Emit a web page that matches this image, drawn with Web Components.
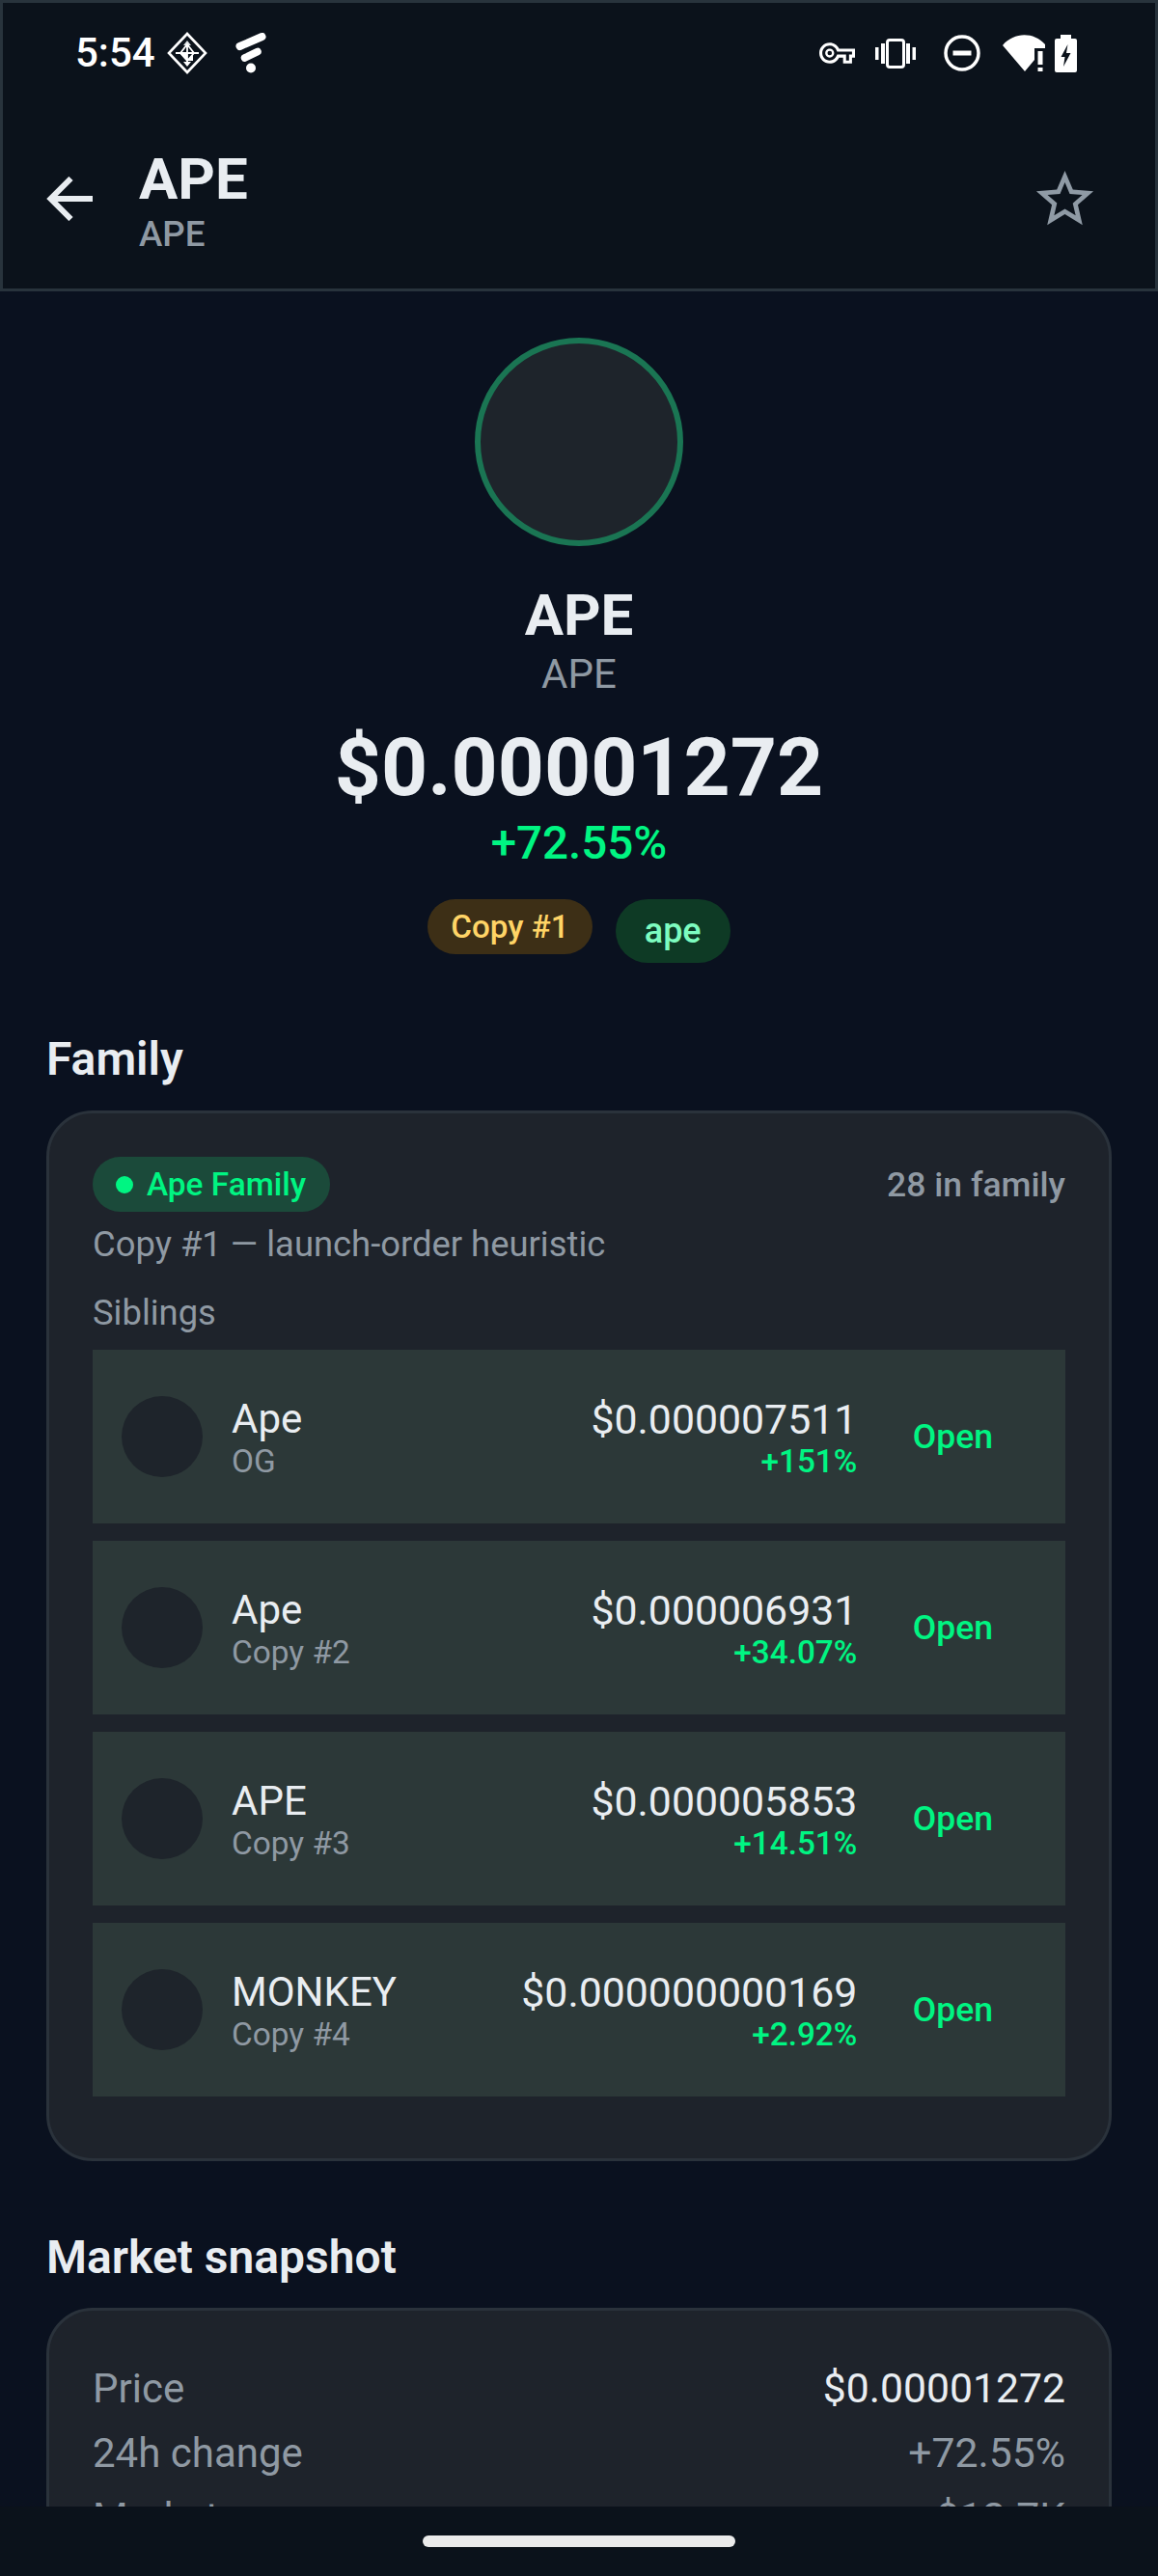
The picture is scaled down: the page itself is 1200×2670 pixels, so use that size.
<!DOCTYPE html>
<html lang="en">
<head>
<meta charset="utf-8">
<title>APE</title>
<style>
    html, body { margin: 0; padding: 0; background: #0a111f; }
    body { font-family: Roboto, "Liberation Sans", sans-serif; }
</style>
</head>
<body>

<coin-screen>
    <status-bar slot="top" time="5:54"></status-bar>
    <app-header slot="top" title="APE" subtitle="APE"></app-header>

    <coin-hero name="APE" symbol="APE" price="$0.00001272" change="+72.55%" copy="Copy #1" tag="ape"></coin-hero>

    <page-section heading="Family" gap="72">
        <family-card label="Ape Family" count="28 in family" note="Copy #1 — launch-order heuristic">
            <sibling-row name="Ape" sub="OG" price="$0.000007511" change="+151%"></sibling-row>
            <sibling-row name="Ape" sub="Copy #2" price="$0.000006931" change="+34.07%"></sibling-row>
            <sibling-row name="APE" sub="Copy #3" price="$0.000005853" change="+14.51%"></sibling-row>
            <sibling-row name="MONKEY" sub="Copy #4" price="$0.000000000169" change="+2.92%"></sibling-row>
        </family-card>
    </page-section>

    <page-section heading="Market snapshot" gap="72" tight>
        <snapshot-card>
            <kv-row label="Price" value="$0.00001272" bright></kv-row>
            <kv-row label="24h change" value="+72.55%"></kv-row>
            <kv-row label="Market cap" value="$12.7K"></kv-row>
        </snapshot-card>
    </page-section>

    <nav-pill slot="bottom"></nav-pill>
</coin-screen>

<script>
class CoinScreen extends HTMLElement {
    constructor() {
        super();
        this.attachShadow({ mode: 'open' });
        this.shadowRoot.innerHTML = `
        <style>
            :host {
                display: flex;
                flex-direction: column;
                width: 1200px;
                height: 2670px;
                overflow: hidden;
                background: #0a111f;
                color: #e9edf1;
            }
            .scroll {
                flex: 1;
                min-height: 0;
                overflow: hidden;
            }
        </style>
        <slot name="top"></slot>
        <div class="scroll"><slot></slot></div>
        <slot name="bottom"></slot>
        `;
    }
}

class StatusBar extends HTMLElement {
    constructor() {
        super();
        this.attachShadow({ mode: 'open' });
        this.shadowRoot.innerHTML = `
        <style>
            :host {
                display: flex;
                align-items: center;
                justify-content: space-between;
                height: 110px;
                box-sizing: border-box;
                padding: 0 81px 3px 75px;
                background: #0b121b;
                border: 3px solid #28333c;
                border-bottom: 0;
                color: #fff;
            }
            .left, .right { display: flex; align-items: center; }
            .time { font: 500 42px/50px Roboto, sans-serif; width: 83px; }
            svg { display: block; fill: #fff; }
            .diamond { margin-left: 12px; }
            .feather { margin-left: 29px; }
            .vib { margin-left: 21px; }
            .dnd { margin-left: 29px; }
            .wifi { margin-left: 23px; }
            .batt { margin-left: 10px; }
        </style>
        <div class="left">
            <span class="time">${this.getAttribute('time')}</span>
            <svg class="diamond" width="42" height="44" viewBox="0 0 42 44">
                <path fill="none" stroke="#fff" stroke-width="2.6" d="M21 2 L40 22 L21 42 L2 22 Z"/>
                <path d="M21 9 L25 14 L21 14 Z M21 9 L17 14 L21 14 Z" fill="#dfe3e6"/>
                <path fill="none" stroke="#fff" stroke-width="1.8" d="M21 13 L28 22 L21 30 L14 22 Z M9 22 H33 M21 13 V35"/>
                <path d="M14 23 H21 V30 Z M21 30 L27 23 V30 Z M21 36 L17 31 H25 Z"/>
            </svg>
            <svg class="feather" width="32" height="42" viewBox="0 0 32 42">
                <path fill="none" stroke="#fff" stroke-width="8" stroke-linecap="round" d="M4.500 14 L27.500 4"/>
                <path fill="none" stroke="#fff" stroke-width="7.500" stroke-linecap="round" d="M9.500 26 L23 19.500"/>
                <circle cx="16" cy="36.500" r="5"/>
            </svg>
        </div>
        <div class="right">
            <svg class="key" width="37" height="22" viewBox="0 5 24 14">
                <path fill-rule="evenodd" d="M22 19h-6v-4h-2.680c-1.140 2.420-3.600 4-6.320 4-3.860 0-7-3.140-7-7s3.140-7 7-7c2.720 0 5.170 1.580 6.320 4H24v6h-2v4zm-4-2h2v-4h2v-2H11.940l-.23-.67C11.010 8.340 9.110 7 7 7c-2.760 0-5 2.240-5 5s2.240 5 5 5c2.110 0 4.010-1.340 4.710-3.330l.23-.67H18v4zM7 15c-1.650 0-3-1.350-3-3s1.350-3 3-3 3 1.350 3 3-1.350 3-3 3zm0-4.500a1.500 1.500 0 1 0 0 3 1.500 1.500 0 0 0 0-3z"/>
            </svg>
            <svg class="vib" width="42" height="31" viewBox="0 0 42 31">
                <rect x="12.500" y="1.500" width="17" height="28" rx="2.500" fill="none" stroke="#fff" stroke-width="3"/>
                <rect x="0" y="9" width="3.500" height="13"/><rect x="6" y="5" width="4" height="21"/>
                <rect x="32" y="5" width="4" height="21"/><rect x="38.500" y="9" width="3.500" height="13"/>
            </svg>
            <svg class="dnd" width="38" height="38" viewBox="0 0 38 38">
                <circle cx="19" cy="19" r="17" fill="none" stroke="#fff" stroke-width="3.500"/>
                <rect x="9.500" y="16.500" width="19" height="5"/>
            </svg>
            <svg class="wifi" width="44" height="38" viewBox="0 0 44 38">
                <path d="M23 38 L0 11 C12 -3 32 -3 44 10 L44 14 L33 14 L33 26 Z"/>
                <rect x="36.500" y="17" width="5" height="14"/>
                <rect x="36.500" y="34" width="5" height="4"/>
            </svg>
            <svg class="batt" width="23" height="39" viewBox="0 0 23 39">
                <path fill-rule="evenodd" d="M6 0 H17 V4 H21 Q23 4 23 6 V37 Q23 39 21 39 H2 Q0 39 0 37 V6 Q0 4 2 4 H6 Z M13.500 10 L6.500 23 H10.500 L9 33 L16.500 19 H12 Z"/>
            </svg>
        </div>
        `;
    }
}

class AppHeader extends HTMLElement {
    constructor() {
        super();
        this.attachShadow({ mode: 'open' });
        this.shadowRoot.innerHTML = `
        <style>
            :host {
                display: flex;
                align-items: center;
                height: 192px;
                box-sizing: border-box;
                padding: 3px 58px 0 45px;
                background: #0b121b;
                border: 3px solid #28333c;
                border-top: 0;
            }
            .back { display: block; flex: none; }
            .titles { flex: 1; margin: 9px 0 0 48px; }
            .title { font: 700 60px/64px Roboto, sans-serif; color: #e9edf1; }
            .sub { font: 500 36.750px/50px Roboto, sans-serif; color: #8f99a3; }
            .star { display: block; flex: none; fill: #8f9aa5; }
        </style>
        <svg class="back" width="48" height="46" viewBox="0 0 48 46">
            <path fill="none" stroke="#e9edf1" stroke-width="6" d="M48 23 H5 M25.500 2 L4.500 23 L25.500 44"/>
        </svg>
        <div class="titles">
            <div class="title">${this.getAttribute('title')}</div>
            <div class="sub">${this.getAttribute('subtitle')}</div>
        </div>
        <svg class="star" width="71" height="71" viewBox="0 0 24 24">
            <path d="M22 9.240l-7.190-.620L12 2 9.190 8.630 2 9.240l5.460 4.730L5.820 21 12 17.270 18.180 21l-1.630-7.030L22 9.240zM12 15.400l-3.760 2.270 1-4.280-3.320-2.880 4.380-.380L12 6.100l1.710 4.040 4.380.380-3.320 2.880 1 4.280L12 15.400z"/>
        </svg>
        `;
    }
}

class CoinHero extends HTMLElement {
    constructor() {
        super();
        this.attachShadow({ mode: 'open' });
        this.shadowRoot.innerHTML = `
        <style>
            :host {
                display: flex;
                flex-direction: column;
                align-items: center;
                padding-top: 48px;
            }
            .logo {
                width: 216px;
                height: 216px;
                box-sizing: border-box;
                border-radius: 50%;
                background: #1e242b;
                border: 6px solid #1a7553;
            }
            .name { margin-top: 38px; font: 700 60px/68px Roboto, sans-serif; color: #e9edf1; }
            .symbol { margin-top: 1px; font: 400 42px/52px Roboto, sans-serif; color: #8f99a3; }
            .price { margin-top: 21px; font: 700 84px/100px Roboto, sans-serif; color: #e9edf1; }
            .change { font: 500 47.500px/56px Roboto, sans-serif; color: #00f582; }
            .chips { display: flex; align-items: flex-start; gap: 24px; margin-top: 30px; }
            .chip { border-radius: 33px; font-family: Roboto, sans-serif; font-weight: 500; }
            .copy { height: 57px; line-height: 57px; padding: 0 24px; font-size: 33.200px; background: #3d2f16; color: #ffd466; }
            .tag { height: 66px; line-height: 66px; padding: 0 30px; font-size: 36px; background: #0e3a25; color: #7dfcc0; }
        </style>
        <div class="logo"></div>
        <div class="name">${this.getAttribute('name')}</div>
        <div class="symbol">${this.getAttribute('symbol')}</div>
        <div class="price">${this.getAttribute('price')}</div>
        <div class="change">${this.getAttribute('change')}</div>
        <div class="chips">
            <span class="chip copy">${this.getAttribute('copy')}</span>
            <span class="chip tag">${this.getAttribute('tag')}</span>
        </div>
        `;
    }
}

class PageSection extends HTMLElement {
    constructor() {
        super();
        this.attachShadow({ mode: 'open' });
        this.shadowRoot.innerHTML = `
        <style>
            :host {
                display: block;
                margin-top: ${this.getAttribute('gap')}px;
                padding: 0 48px;
            }
            h2 {
                all: unset;
                display: block;
                font: 600 48px/56px Roboto, sans-serif;
                color: #e9edf1;
                margin-bottom: 25px;
            }
            :host([tight]) h2 { margin-bottom: 24px; }
        </style>
        <h2>${this.getAttribute('heading')}</h2>
        <slot></slot>
        `;
    }
}

class FamilyCard extends HTMLElement {
    constructor() {
        super();
        this.attachShadow({ mode: 'open' });
        this.shadowRoot.innerHTML = `
        <style>
            :host {
                display: block;
                box-sizing: border-box;
                padding: 45px 45px 64px;
                background: #1e232b;
                border: 3px solid #2a323b;
                border-radius: 48px;
                font-family: Roboto, sans-serif;
            }
            .head { display: flex; align-items: center; justify-content: space-between; }
            .pill {
                display: flex;
                align-items: center;
                gap: 14px;
                height: 57px;
                padding: 0 25px 0 24px;
                border-radius: 29px;
                background: #1b4a3a;
                color: #00f582;
                font-size: 33.400px;
                font-weight: 500;
            }
            .dot { width: 18px; height: 18px; border-radius: 50%; background: #00f582; }
            .count, .note, .label { font-size: 36.400px; line-height: 44px; color: #8f99a3; font-weight: 400; }
            .count { font-size: 35.500px; font-weight: 500; }
            .note { margin-top: 12px; }
            .label { margin-top: 27px; margin-bottom: 16px; }
            .rows { display: flex; flex-direction: column; gap: 18px; }
        </style>
        <div class="head">
            <span class="pill"><span class="dot"></span>${this.getAttribute('label')}</span>
            <span class="count">${this.getAttribute('count')}</span>
        </div>
        <div class="note">${this.getAttribute('note')}</div>
        <div class="label">Siblings</div>
        <div class="rows"><slot></slot></div>
        `;
    }
}

class SiblingRow extends HTMLElement {
    constructor() {
        super();
        this.attachShadow({ mode: 'open' });
        this.shadowRoot.innerHTML = `
        <style>
            :host {
                display: flex;
                align-items: center;
                height: 180px;
                box-sizing: border-box;
                padding-left: 30px;
                background: #2c3838;
                font-family: Roboto, sans-serif;
            }
            .avatar { flex: none; width: 84px; height: 84px; border-radius: 50%; background: #1e242b; }
            .who { flex: 1; margin-left: 30px; }
            .name { font-size: 42px; line-height: 50px; color: #e9edf1; }
            .sub { font-size: 33.400px; line-height: 37px; color: #8f99a3; }
            .nums { text-align: right; }
            .price { font-size: 42.800px; line-height: 50px; color: #e9edf1; }
            .change { font-size: 33.300px; line-height: 37px; color: #00f582; font-weight: 500; }
            .open { margin-left: 57.500px; padding-right: 75px; font-size: 35.500px; font-weight: 500; color: #00f582; }
        </style>
        <div class="avatar"></div>
        <div class="who">
            <div class="name">${this.getAttribute('name')}</div>
            <div class="sub">${this.getAttribute('sub')}</div>
        </div>
        <div class="nums">
            <div class="price">${this.getAttribute('price')}</div>
            <div class="change">${this.getAttribute('change')}</div>
        </div>
        <div class="open">Open</div>
        `;
    }
}

class SnapshotCard extends HTMLElement {
    constructor() {
        super();
        this.attachShadow({ mode: 'open' });
        this.shadowRoot.innerHTML = `
        <style>
            :host {
                display: block;
                box-sizing: border-box;
                padding: 47px 45px;
                background: #1e232b;
                border: 3px solid #2a323b;
                border-radius: 48px;
            }
        </style>
        <slot></slot>
        `;
    }
}

class KvRow extends HTMLElement {
    constructor() {
        super();
        this.attachShadow({ mode: 'open' });
        this.shadowRoot.innerHTML = `
        <style>
            :host {
                display: flex;
                justify-content: space-between;
                font: 400 42px/67px Roboto, sans-serif;
                color: #8f99a3;
            }
            .value { font-size: 42.700px; }
            :host([bright]) .value { color: #e9edf1; }
        </style>
        <span>${this.getAttribute('label')}</span>
        <span class="value">${this.getAttribute('value')}</span>
        `;
    }
}

class NavPill extends HTMLElement {
    constructor() {
        super();
        this.attachShadow({ mode: 'open' });
        this.shadowRoot.innerHTML = `
        <style>
            :host {
                display: flex;
                justify-content: center;
                flex: none;
                height: 72px;
                box-sizing: border-box;
                padding-top: 30px;
                background: #0b121b;
            }
            div { width: 324px; height: 12px; border-radius: 6px; background: #ebebeb; }
        </style>
        <div></div>
        `;
    }
}

customElements.define('coin-screen', CoinScreen);
customElements.define('status-bar', StatusBar);
customElements.define('app-header', AppHeader);
customElements.define('coin-hero', CoinHero);
customElements.define('page-section', PageSection);
customElements.define('family-card', FamilyCard);
customElements.define('sibling-row', SiblingRow);
customElements.define('snapshot-card', SnapshotCard);
customElements.define('kv-row', KvRow);
customElements.define('nav-pill', NavPill);
</script>
</body>
</html>
